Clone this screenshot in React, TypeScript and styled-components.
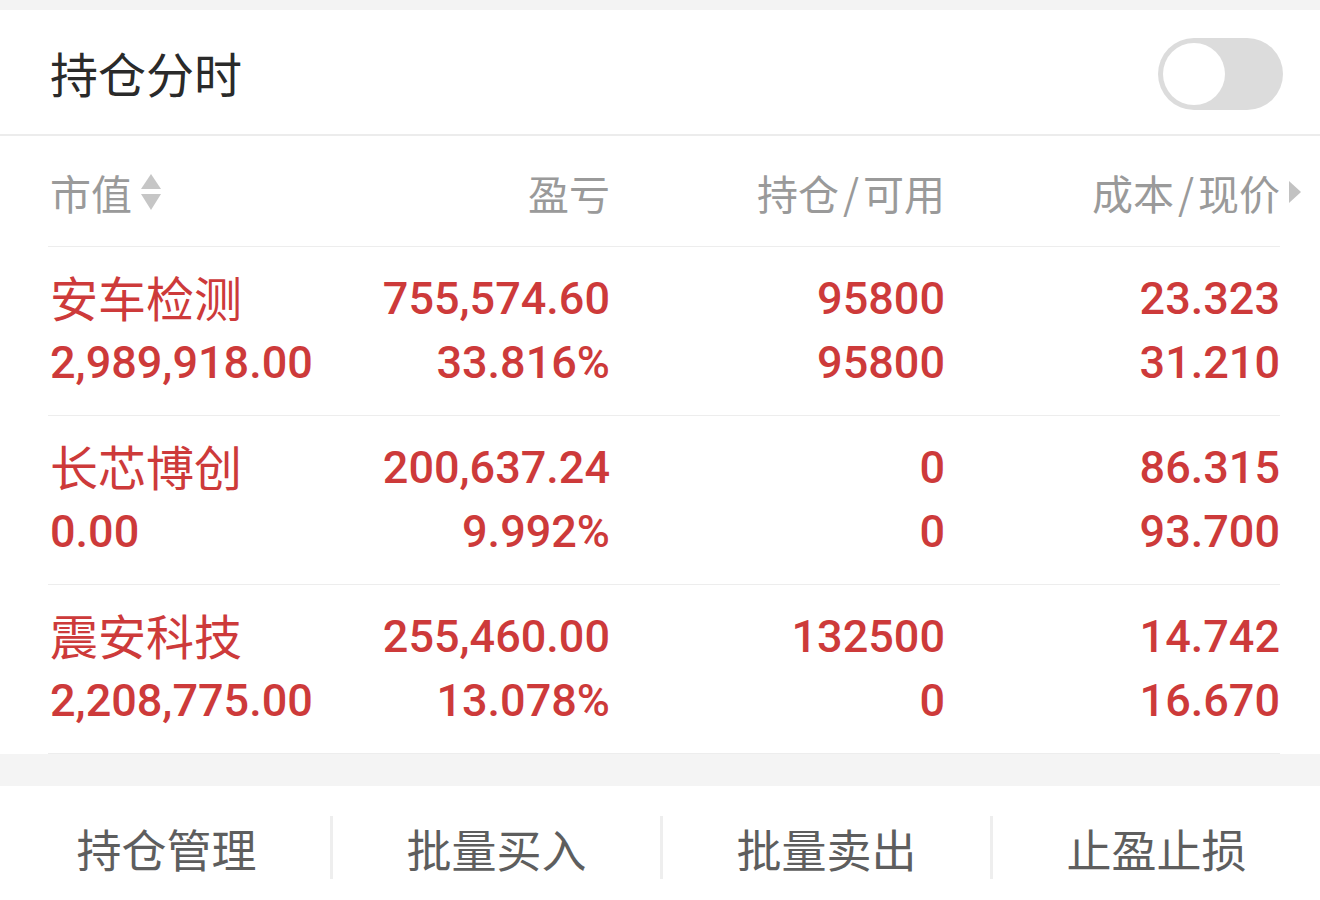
import React from "react";
import styled, { createGlobalStyle } from "styled-components";

const GlobalStyle = createGlobalStyle`
    html, body {
        margin: 0;
        padding: 0;
        background: #ffffff;
    }
    body {
        font-family: "Noto Sans CJK SC", "Noto Sans", sans-serif;
    }
`;

const RED = "#cd3a3a";
const NUM_FONT = `Roboto, "Noto Sans CJK SC", sans-serif`;

const Page = styled.div`
    width: 1320px;
    height: 900px;
    display: flex;
    flex-direction: column;
    background: #f4f4f4;
    overflow: hidden;
`;

const TopStrip = styled.div`
    height: 10px;
    background: #f3f3f3;
`;

const Card = styled.div`
    background: #ffffff;
    display: flex;
    flex-direction: column;
`;

const TitleBar = styled.div`
    height: 124px;
    padding: 0 37px 0 50px;
    display: flex;
    align-items: center;
    justify-content: space-between;
    border-bottom: 2px solid #ececec;
`;

const Title = styled.h1`
    margin: 0;
    font-size: 48px;
    font-weight: 400;
    color: #2a2a2a;
    line-height: 1;
`;

const Toggle = styled.button<{ on?: boolean }>`
    width: 125px;
    height: 72px;
    margin-top: 4px;
    border: none;
    border-radius: 36px;
    padding: 5px;
    background: ${(p) => (p.on ? RED : "#dcdcdc")};
    display: flex;
    justify-content: ${(p) => (p.on ? "flex-end" : "flex-start")};
    cursor: pointer;
`;

const Knob = styled.span`
    width: 62px;
    height: 62px;
    border-radius: 50%;
    background: #ffffff;
`;

const Table = styled.div`
    padding: 0 40px 0 48px;
`;

const GridRow = styled.div`
    display: grid;
    grid-template-columns: 227px 335px 335px 335px;
    border-bottom: 1px solid #ededed;
`;

const HeadRow = styled(GridRow)`
    height: 110px;
    align-items: center;
`;

const HeadCell = styled.div<{ align?: "left" | "right" }>`
    position: relative;
    font-size: 41px;
    color: #9a9a9a;
    text-align: ${(p) => p.align || "right"};
    display: flex;
    align-items: center;
    justify-content: ${(p) => (p.align === "left" ? "flex-start" : "flex-end")};
    padding-left: ${(p) => (p.align === "left" ? "2px" : "0")};
    line-height: 1;
    padding-top: 2px;
`;

const Slash = styled.span`
    margin: 0 4px;
`;

const SortIcon = styled.svg`
    width: 22px;
    height: 40px;
    margin-left: 8px;
`;

const MoreArrow = styled.svg`
    position: absolute;
    left: calc(100% + 8px);
    top: 50%;
    transform: translateY(-46%);
    width: 14px;
    height: 24px;
`;

const DataRow = styled(GridRow)`
    padding: 20px 0;
`;

const Cell = styled.div<{ align?: "left" | "right" }>`
    display: flex;
    flex-direction: column;
    align-items: ${(p) => (p.align === "left" ? "flex-start" : "flex-end")};
    padding-left: ${(p) => (p.align === "left" ? "2px" : "0")};
    white-space: nowrap;
`;

const Line = styled.div<{ cjk?: boolean }>`
    height: 64px;
    line-height: 64px;
    color: ${RED};
    font-family: ${(p) => (p.cjk ? `"Noto Sans CJK SC", sans-serif` : NUM_FONT)};
    font-size: ${(p) => (p.cjk ? "48px" : "45px")};
    font-weight: ${(p) => (p.cjk ? 400 : 500)};
    margin-top: ${(p) => (p.cjk ? "-3px" : "0")};
    margin-bottom: ${(p) => (p.cjk ? "3px" : "0")};
`;

const Band = styled.div`
    height: 32px;
    background: #f4f4f4;
`;

const Footer = styled.div`
    flex: 1;
    background: #ffffff;
    display: grid;
    grid-template-columns: repeat(4, 1fr);
    align-items: center;
    padding-top: 8px;
`;

const Action = styled.button<{ divider?: boolean }>`
    height: 63px;
    border: none;
    background: transparent;
    font-family: "Noto Sans CJK SC", sans-serif;
    font-size: 45px;
    color: #5e5e5e;
    border-left: ${(p) => (p.divider ? "3px solid #eeeeee" : "3px solid transparent")};
    padding: 0;
    cursor: pointer;
`;

type Holding = {
    name: string;
    value: string;
    pnl: string;
    pct: string;
    hold: string;
    avail: string;
    cost: string;
    price: string;
};

const holdings: Holding[] = [
    {
        name: "安车检测",
        value: "2,989,918.00",
        pnl: "755,574.60",
        pct: "33.816%",
        hold: "95800",
        avail: "95800",
        cost: "23.323",
        price: "31.210",
    },
    {
        name: "长芯博创",
        value: "0.00",
        pnl: "200,637.24",
        pct: "9.992%",
        hold: "0",
        avail: "0",
        cost: "86.315",
        price: "93.700",
    },
    {
        name: "震安科技",
        value: "2,208,775.00",
        pnl: "255,460.00",
        pct: "13.078%",
        hold: "132500",
        avail: "0",
        cost: "14.742",
        price: "16.670",
    },
];

const actions = ["持仓管理", "批量买入", "批量卖出", "止盈止损"];

export default function App() {
    const [timeshare, setTimeshare] = React.useState(false);

    return (
        <Page>
            <GlobalStyle />
            <TopStrip />
            <Card>
                <TitleBar>
                    <Title>持仓分时</Title>
                    <Toggle on={timeshare} onClick={() => setTimeshare(!timeshare)}>
                        <Knob />
                    </Toggle>
                </TitleBar>
                <Table>
                    <HeadRow>
                        <HeadCell align="left">
                            市值
                            <SortIcon viewBox="0 0 22 40">
                                <polygon points="11,2 21,17 1,17" fill="#c6c6c6" />
                                <polygon points="1,22 21,22 11,38" fill="#c6c6c6" />
                            </SortIcon>
                        </HeadCell>
                        <HeadCell>盈亏</HeadCell>
                        <HeadCell>
                            持仓<Slash>/</Slash>可用
                        </HeadCell>
                        <HeadCell>
                            成本<Slash>/</Slash>现价
                            <MoreArrow viewBox="0 0 14 24">
                                <polygon points="1,1 13,12 1,23" fill="#c2c2c2" />
                            </MoreArrow>
                        </HeadCell>
                    </HeadRow>
                    {holdings.map((h) => (
                        <DataRow key={h.name}>
                            <Cell align="left">
                                <Line cjk>{h.name}</Line>
                                <Line>{h.value}</Line>
                            </Cell>
                            <Cell>
                                <Line>{h.pnl}</Line>
                                <Line>{h.pct}</Line>
                            </Cell>
                            <Cell>
                                <Line>{h.hold}</Line>
                                <Line>{h.avail}</Line>
                            </Cell>
                            <Cell>
                                <Line>{h.cost}</Line>
                                <Line>{h.price}</Line>
                            </Cell>
                        </DataRow>
                    ))}
                </Table>
            </Card>
            <Band />
            <Footer>
                {actions.map((a, i) => (
                    <Action key={a} divider={i > 0}>
                        {a}
                    </Action>
                ))}
            </Footer>
        </Page>
    );
}
